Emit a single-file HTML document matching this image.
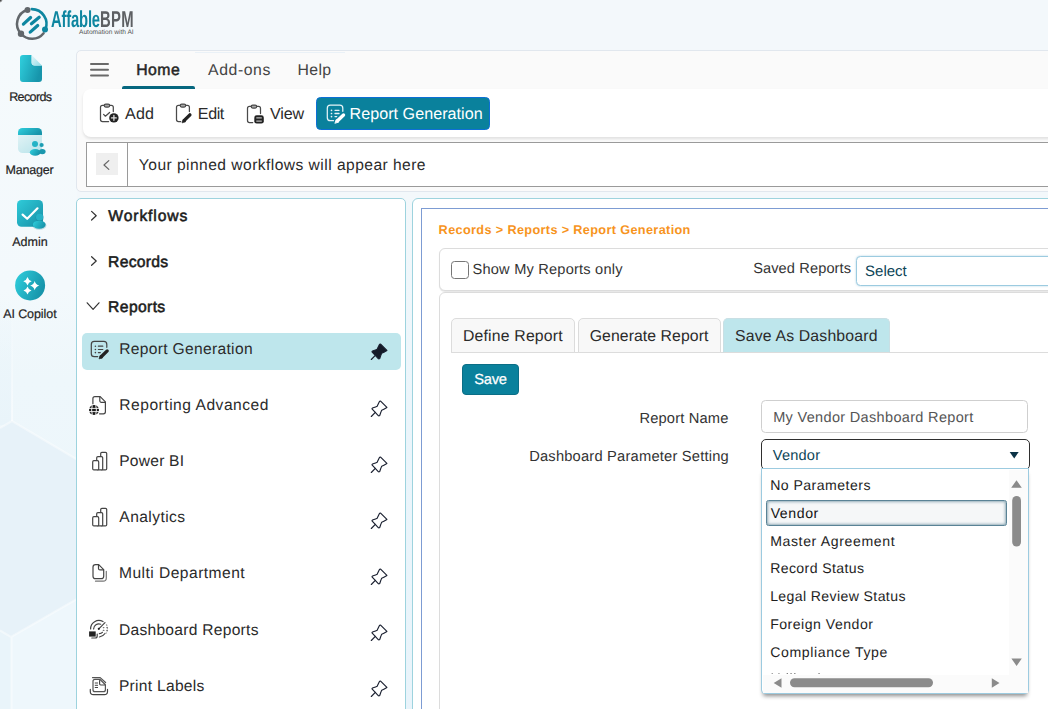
<!DOCTYPE html>
<html lang="en"><head><meta charset="utf-8"><title>AffableBPM - Report Generation</title>
<style>
*{box-sizing:border-box;margin:0;padding:0}
html,body{width:1048px;height:709px;overflow:hidden}
body{position:relative;background:linear-gradient(180deg,#f3f8fb 0,#f3f8fb 28%,#ebf5fb 60%,#e9f4fb 100%);font-family:"Liberation Sans",sans-serif;color:#2b2b2b}
.t{position:absolute;white-space:nowrap;line-height:1;text-rendering:geometricPrecision}
.a{position:absolute}
svg{position:absolute;overflow:visible}
</style></head><body>
<svg style="left:0;top:50px" width="77" height="659" viewBox="0 50 77 659">
<defs><linearGradient id="rb" x1="0" y1="0" x2="0" y2="1"><stop offset="0" stop-color="#f5fafc"/><stop offset=".36" stop-color="#f3f9fc"/><stop offset=".5" stop-color="#eef7fb"/><stop offset="1" stop-color="#ebf5fb"/></linearGradient>
<linearGradient id="rf" x1="0" y1="0" x2="0" y2="1"><stop offset="0" stop-color="#e9f4fa" stop-opacity="0"/><stop offset="1" stop-color="#e9f4fa"/></linearGradient>
<linearGradient id="lf" x1="0" y1="0" x2="0" y2="1"><stop offset="0" stop-color="#fff" stop-opacity="0"/><stop offset="1" stop-color="#fff" stop-opacity=".55"/></linearGradient></defs>
<rect x="0" y="50" width="77" height="659" fill="url(#rb)"/>
<rect x="0" y="300" width="12" height="125" fill="url(#rf)"/>
<path d="M12 421 L77 459.500 V599 L11 637 L0 630.500 V428z" fill="#e7f2f9"/>
<path d="M0 630.500 L11 637 V709 H0z" fill="#e9f4fa"/>
<path d="M11 637 L77 599 V709 H11z" fill="#eef7fc"/>
<rect x="11" y="300" width="2" height="121" fill="url(#lf)"/>
<path d="M0 428 L12 421 L77 459.500 M0 630.500 L11 637 L77 599 M11.500 637 V709" fill="none" stroke="#fff" stroke-opacity=".42" stroke-width="2.200" style="filter:blur(.5px)"/>
</svg>
<div class="a" style="left:0;top:0;width:5px;height:5px;background:radial-gradient(circle at 0 0,#3a3a3a 0,#555 1px,rgba(120,120,120,0) 2.800px)"></div>
<header>
<svg style="left:0;top:0" width="150" height="50" viewBox="0 0 150 50">
<g fill="none" stroke-linecap="round">
<path d="M27.5 9.7 A14.7 14.7 0 0 0 21 33.8 A14.7 14.7 0 0 0 43.6 33.3" stroke="#62676b" stroke-width="2.5"/>
<path d="M31.8 9.1 A14.7 14.7 0 0 1 45.3 29.5" stroke="#0e86a0" stroke-width="2.6"/>
<path d="M23.4 24.1 L30.6 17.5 M31.4 23.8 L39.2 17.2 M30.2 32.1 L37.7 25.5" stroke="#0e86a0" stroke-width="3.2"/>
</g>
<circle cx="27.5" cy="10" r="3" fill="#62676b"/><circle cx="21" cy="33.7" r="3.2" fill="#62676b"/><circle cx="45" cy="29.5" r="3" fill="#0e86a0"/>
</svg>
<span class="t" style="left:51.2px;top:7.6px;font-size:23px;font-weight:bold;transform-origin:0 0;transform:scaleX(0.645);color:#0e86a0;letter-spacing:-0.3px">Affable<span style="color:#5d6063;letter-spacing:0.5px">BPM</span></span>
<span class="t" style="left:79px;top:29.5px;font-size:6.6px;color:#555;transform-origin:0 0;transform:scaleX(1.0)">Automation with AI</span>
</header>
<aside>
<svg style="left:0;top:50px" width="77" height="290" viewBox="0 50 77 290">
<defs>
<linearGradient id="g1" x1="0" y1="0" x2="1" y2="1"><stop offset="0" stop-color="#2fcbd9"/><stop offset="1" stop-color="#168fa6"/></linearGradient>
<linearGradient id="g2" x1="0" y1="0" x2="1" y2="1"><stop offset="0" stop-color="#e6f6f9"/><stop offset="1" stop-color="#8fdde7"/></linearGradient>
<linearGradient id="g3" x1="0" y1="0" x2="0.6" y2="1"><stop offset="0" stop-color="#eaf6f8"/><stop offset="1" stop-color="#bfe6ec"/></linearGradient>
<linearGradient id="g4" x1="0" y1="0" x2="1" y2="0.4"><stop offset="0" stop-color="#30d0de"/><stop offset="1" stop-color="#1795ab"/></linearGradient>
</defs>
<!-- Records -->
<path d="M23 55 H31.6 V62.4 a3 3 0 0 0 3 3 H42 V79 a3 3 0 0 1 -3 3 H23 a3 3 0 0 1 -3 -3 V58 a3 3 0 0 1 3 -3z" fill="url(#g4)"/>
<path d="M31.6 55 L42 65.4 H34.6 a3 3 0 0 1 -3 -3z" fill="url(#g2)"/>
<!-- Manager -->
<rect x="18" y="128" width="24" height="25" rx="4.5" fill="url(#g3)"/>
<path d="M18 135 V132.5 a4.5 4.5 0 0 1 4.5 -4.5 H37.500 a4.500 4.500 0 0 1 4.500 4.500 V135z" fill="url(#g4)"/>
<circle cx="41.6" cy="145" r="2.1" fill="#1c9db3"/><ellipse cx="42.3" cy="151.600" rx="3.3" ry="2.7" fill="#1a98ae"/>
<circle cx="35" cy="144" r="3" fill="#24b3c6"/><ellipse cx="35.2" cy="152.4" rx="5.4" ry="3.400" fill="url(#g4)"/>
<!-- Admin -->
<rect x="17" y="200" width="26" height="26.700" rx="4.5" fill="url(#g1)"/>
<path d="M22.6 214.6 L27.2 218.8 L37.5 208.3" fill="none" stroke="#fff" stroke-width="2.2" stroke-linecap="round" stroke-linejoin="round"/>
<circle cx="39.8" cy="217.6" r="4.2" fill="#0f7c92" opacity=".35"/><ellipse cx="39.4" cy="225.400" rx="7" ry="4.4" fill="#0f7c92" opacity=".25"/><circle cx="39.6" cy="217" r="3.600" fill="#25b2c6"/><ellipse cx="39.2" cy="224.700" rx="6.4" ry="4" fill="url(#g4)"/>
<!-- AI Copilot -->
<circle cx="30.1" cy="285.4" r="15" fill="url(#g4)"/>
<g fill="#fff">
<path d="M27.5 277.00 Q28.42 280.28 31.70 281.2 Q28.42 282.12 27.5 285.40 Q26.58 282.12 23.30 281.2 Q26.58 280.28 27.5 277.00z"/>
<path d="M34.7 281.00 Q35.71 284.59 39.30 285.6 Q35.71 286.61 34.7 290.20 Q33.69 286.61 30.10 285.6 Q33.69 284.59 34.7 281.00z"/>
<path d="M27.5 286.40 Q28.38 289.52 31.50 290.4 Q28.38 291.28 27.5 294.40 Q26.62 291.28 23.50 290.4 Q26.62 289.52 27.5 286.40z"/>
</g>
</svg>
<span class="t" style="left:9.18px;top:91.02px;font-size:12.5px;font-weight:normal;color:#1f1f1f;letter-spacing:-0.610px;-webkit-text-stroke:0.2px #1f1f1f;">Records</span>
<span class="t" style="left:5.43px;top:164.02px;font-size:12.5px;font-weight:normal;color:#1f1f1f;letter-spacing:-0.200px;-webkit-text-stroke:0.2px #1f1f1f;">Manager</span>
<span class="t" style="left:12.13px;top:236.02px;font-size:12.5px;font-weight:normal;color:#1f1f1f;letter-spacing:0.032px;-webkit-text-stroke:0.2px #1f1f1f;">Admin</span>
<span class="t" style="left:3.13px;top:308.02px;font-size:12.5px;font-weight:normal;color:#1f1f1f;letter-spacing:-0.080px;-webkit-text-stroke:0.2px #1f1f1f;">AI Copilot</span>
</aside>
<section>
<div class="a" style="left:76px;top:50px;width:1000px;height:142px;background:#fafafa;border:1px solid #e1e7ee;border-radius:5px"></div>
<div class="a" style="left:195px;top:52px;width:150px;height:1px;background:#eaf1f7"></div>
<div class="a" style="left:90px;top:63.300px;width:19px;height:2.100px;background:#696969;border-radius:1px;box-shadow:0 5.700px 0 #696969,0 11.500px 0 #696969"></div>
<span class="t" style="left:136.25px;top:62.63px;font-size:15.8px;font-weight:normal;color:#262626;letter-spacing:0.459px;-webkit-text-stroke:0.5px #262626;">Home</span>
<span class="t" style="left:208.06px;top:62.63px;font-size:15.8px;font-weight:normal;color:#444;letter-spacing:0.576px;">Add-ons</span>
<span class="t" style="left:297.62px;top:62.63px;font-size:15.8px;font-weight:normal;color:#444;letter-spacing:0.294px;">Help</span>
<div class="a" style="left:122px;top:86px;width:72.5px;height:3px;background:#06677f;border-radius:2px 2px 0 0"></div>
<div class="a" style="left:83px;top:89px;width:1000px;height:48px;background:#fff;border-radius:8px;box-shadow:0 2px 3px rgba(0,0,0,.10)"></div>
<svg style="left:94px;top:98px" width="40" height="30" viewBox="94 98 40 30" fill="none" stroke="#4a4a4a" stroke-width="1.25" stroke-linecap="round" stroke-linejoin="round">
<path d="M113.300 111.600 V107.300 a2 2 0 0 0 -2 -2 H109.700 M104.200 105.300 H102.500 a2 2 0 0 0 -2 2 V119.500 a2 2 0 0 0 2 2 H108.600"/>
<rect x="104.200" y="104" width="5.500" height="3" rx="1.500" fill="#aaa"/>
<path d="M103.600 114.400 L105.400 116.200 L109.600 112.500"/>
<circle cx="113.900" cy="117.900" r="4.700" fill="#222" stroke="none"/>
<path d="M113.900 115.500 V120.300 M111.500 117.900 H116.300" stroke="#ddd" stroke-width="1.3"/>
</svg>
<span class="t" style="left:125.07px;top:105.97px;font-size:16.1px;font-weight:normal;color:#2b2b2b;letter-spacing:0.154px;">Add</span>
<svg style="left:170px;top:98px" width="40" height="30" viewBox="170 98 40 30" fill="none" stroke="#4a4a4a" stroke-width="1.25" stroke-linecap="round" stroke-linejoin="round">
<path d="M189.400 111.600 V107.300 a2 2 0 0 0 -2 -2 H185.700 M180.200 105.300 H178.500 a2 2 0 0 0 -2 2 V119.500 a2 2 0 0 0 2 2 H180.800"/>
<rect x="180.200" y="104" width="5.500" height="3" rx="1.500" fill="#aaa"/>
<path d="M184.300 120.400 L189.900 114.900" stroke="#222" stroke-width="3.400"/>
<path d="M182.200 122.500 L183.300 119.200 L185.400 121.400z" fill="#222" stroke="#222" stroke-width="0.8"/>
</svg>
<span class="t" style="left:197.85px;top:105.97px;font-size:16.1px;font-weight:normal;color:#2b2b2b;letter-spacing:-0.425px;">Edit</span>
<svg style="left:240px;top:98px" width="40" height="30" viewBox="240 98 40 30" fill="none" stroke="#4a4a4a" stroke-width="1.25" stroke-linecap="round" stroke-linejoin="round">
<path d="M260.500 113.500 V108.400 a2 2 0 0 0 -2 -2 H256.700 M251.200 106.400 H249.500 a2 2 0 0 0 -2 2 V120.600 a2 2 0 0 0 2 2 H252.700"/>
<rect x="251.200" y="105.100" width="5.500" height="3" rx="1.500" fill="#aaa"/>
<rect x="254.300" y="115.300" width="9.500" height="8.300" rx="2.400" fill="#222" stroke="none"/>
<path d="M256.300 117.900 H261.800 M256.300 121.100 H261.800" stroke="#bbb" stroke-width="1.300" stroke-linecap="butt"/>
</svg>
<span class="t" style="left:269.98px;top:105.97px;font-size:16.1px;font-weight:normal;color:#2b2b2b;letter-spacing:-0.151px;">View</span>
<div class="a" style="left:316px;top:97px;width:174px;height:33px;background:#0a819c;border:1px solid #0d6fd6;border-radius:4.5px"></div>
<svg style="left:318px;top:98px" width="40" height="30" viewBox="318 98 40 30" fill="none" stroke="#e6f3f6" stroke-width="1.25" stroke-linecap="round" stroke-linejoin="round">
<path d="M342.800 111.300 V108.200 a3 3 0 0 0 -3 -3 H330.300 a3 3 0 0 0 -3 3 V117.700 a3 3 0 0 0 3 3 H333.500"/>
<path d="M335 110.300 H339 M335 113.500 H339 M335 116.600 H336.700" stroke-width="1.3"/>
<path d="M331.500 110.300 h.01 M331.500 113.500 h.01 M331.500 116.600 h.01" stroke-width="1.7"/>
<path d="M337.300 121 L343.500 115" stroke="#fff" stroke-width="3.400"/>
<path d="M335 123 L336.200 119.600 L338.400 121.800z" fill="#fff" stroke="#fff" stroke-width="0.8"/>
</svg>
<span class="t" style="left:349.53px;top:105.97px;font-size:16.1px;font-weight:normal;color:#fff;letter-spacing:0.044px;">Report Generation</span>
<div class="a" style="left:86px;top:142px;width:1000px;height:45px;background:#fff;border:1px solid #9a9a9a"></div>
<div class="a" style="left:127px;top:142px;width:1px;height:45px;background:#9a9a9a"></div>
<div class="a" style="left:96px;top:153px;width:22px;height:22px;background:#efefef"></div>
<svg style="left:96px;top:153px" width="22" height="22" viewBox="96 153 22 22" fill="none" stroke="#666" stroke-width="1.2" stroke-linecap="round" stroke-linejoin="round"><path d="M108.800 160.600 L104 165 L108.800 169.400"/></svg>
<span class="t" style="left:138.84px;top:157.69px;font-size:15.6px;font-weight:normal;color:#2b2b2b;letter-spacing:0.455px;">Your pinned workflows will appear here</span>
</section>
<nav>
<div class="a" style="left:76px;top:198px;width:330px;height:600px;background:#fff;border:1px solid #9dd3de;border-radius:5px"></div>
<svg style="left:86px;top:205px" width="20" height="110" viewBox="86 205 20 110" fill="none" stroke="#333" stroke-width="1.2" stroke-linecap="round" stroke-linejoin="round"><path d="M91.600 211.400 L96.200 215.700 L91.600 220 M91.600 256.700 L96.200 261 L91.600 265.300 M87.200 302.800 L93.100 309.300 L99 302.800"/></svg>
<span class="t" style="left:108.35px;top:208.51px;font-size:15.7px;font-weight:normal;color:#1c1c1c;letter-spacing:0.865px;-webkit-text-stroke:0.55px #1c1c1c;">Workflows</span>
<span class="t" style="left:108.12px;top:254.51px;font-size:15.7px;font-weight:normal;color:#1c1c1c;letter-spacing:0.261px;-webkit-text-stroke:0.55px #1c1c1c;">Records</span>
<span class="t" style="left:108.12px;top:300.01px;font-size:15.7px;font-weight:normal;color:#1c1c1c;letter-spacing:0.363px;-webkit-text-stroke:0.55px #1c1c1c;">Reports</span>
<div class="a" style="left:82px;top:333px;width:319px;height:37px;background:#bee6ec;border-radius:5px"></div>
<span class="t" style="left:119.22px;top:341.99px;font-size:15.6px;font-weight:normal;color:#2b2b2b;letter-spacing:0.316px;">Report Generation</span>
<span class="t" style="left:119.22px;top:397.79px;font-size:15.6px;font-weight:normal;color:#2b2b2b;letter-spacing:0.519px;">Reporting Advanced</span>
<span class="t" style="left:119.22px;top:453.79px;font-size:15.6px;font-weight:normal;color:#2b2b2b;letter-spacing:0.226px;">Power BI</span>
<span class="t" style="left:119.36px;top:509.79px;font-size:15.6px;font-weight:normal;color:#2b2b2b;letter-spacing:0.423px;">Analytics</span>
<span class="t" style="left:118.93px;top:565.69px;font-size:15.6px;font-weight:normal;color:#2b2b2b;letter-spacing:0.467px;">Multi Department</span>
<span class="t" style="left:118.95px;top:623.09px;font-size:15.6px;font-weight:normal;color:#2b2b2b;letter-spacing:0.267px;">Dashboard Reports</span>
<span class="t" style="left:118.95px;top:678.99px;font-size:15.6px;font-weight:normal;color:#2b2b2b;letter-spacing:0.275px;">Print Labels</span>
<svg style="left:84px;top:334px" width="30" height="36" viewBox="84 334 30 36" fill="none" stroke="#444" stroke-width="1.2" stroke-linecap="round" stroke-linejoin="round"><path d="M106.800 347.300 V344.400 a3 3 0 0 0 -3 -3 H94.300 a3 3 0 0 0 -3 3 V353.700 a3 3 0 0 0 3 3 H97.700"/>
<path d="M98.400 346.200 H102.800 M98.400 349.500 H102.800 M98.400 352.600 H100.300" stroke-width="1.2"/>
<path d="M95.400 346.200 h.01 M95.400 349.500 h.01 M95.400 352.600 h.01" stroke-width="1.6"/>
<path d="M101.200 356.800 L107.200 350.900" stroke="#222" stroke-width="3.300"/>
<path d="M99.200 358.500 L100.300 355.500 L102.300 357.500z" fill="#222" stroke="#222" stroke-width="0.8"/></svg>
<svg style="left:84px;top:390px" width="30" height="36" viewBox="84 390 30 36" fill="none" stroke="#444" stroke-width="1.2" stroke-linecap="round" stroke-linejoin="round"><path d="M92.900 403.700 V398.600 a2 2 0 0 1 2 -2 H100.200 L105.400 401.800 V411.800 a2 2 0 0 1 -2 2 H99.500"/>
<path d="M99.800 396.800 V400.800 a1.500 1.500 0 0 0 1.500 1.500 H105.200"/>
<circle cx="94" cy="410" r="5" fill="#1a1a1a" stroke="none"/>
<path d="M89.400 408.400 H98.600 M89.400 411.600 H98.600 M92.200 405.600 Q90.900 410 92.200 414.400 M95.800 405.600 Q97.100 410 95.800 414.400" stroke="#fff" stroke-width="0.9"/></svg>
<svg style="left:84px;top:446px" width="30" height="36" viewBox="84 446 30 36" fill="none" stroke="#444" stroke-width="1.2" stroke-linecap="round" stroke-linejoin="round"><rect x="100.700" y="452.4" width="6" height="17.5" rx="1.200" fill="#fff"/>
<rect x="96.700" y="456.6" width="6" height="13.3" rx="1.200" fill="#fff"/>
<rect x="92.700" y="460.7" width="6" height="9.2" rx="1.200" fill="#fff"/></svg>
<svg style="left:84px;top:502px" width="30" height="36" viewBox="84 502 30 36" fill="none" stroke="#444" stroke-width="1.2" stroke-linecap="round" stroke-linejoin="round"><rect x="100.700" y="508.4" width="6" height="17.5" rx="1.200" fill="#fff"/>
<rect x="96.700" y="512.6" width="6" height="13.3" rx="1.200" fill="#fff"/>
<rect x="92.700" y="516.7" width="6" height="9.2" rx="1.200" fill="#fff"/></svg>
<svg style="left:84px;top:558px" width="30" height="36" viewBox="84 558 30 36" fill="none" stroke="#444" stroke-width="1.2" stroke-linecap="round" stroke-linejoin="round"><path d="M95.500 564.600 H98.700 L103.700 569.600 V576.200 a2.500 2.500 0 0 1 -2.500 2.500 H95.500 a2.500 2.500 0 0 1 -2.500 -2.500 V567.100 a2.500 2.500 0 0 1 2.500 -2.500z"/>
<path d="M98.500 564.800 V568.400 a1.500 1.500 0 0 0 1.500 1.500 H103.500"/>
<path d="M106.300 571.300 V578 a3.200 3.200 0 0 1 -3.200 3.200 H95.500" stroke="#777"/></svg>
<svg style="left:84px;top:614px" width="30" height="36" viewBox="84 614 30 36" fill="none" stroke="#444" stroke-width="1.2" stroke-linecap="round" stroke-linejoin="round"><path d="M90.600 629 A8.300 8.300 0 0 1 103 621.600" />
<path d="M93.600 629 A5.300 5.300 0 0 1 100.700 624.200" />
<path d="M98.800 628.800 L105 622.600"/>
<circle cx="98.800" cy="628.800" r="1.100" fill="#222" stroke="none"/>
<path d="M99.400 633.700 Q101.300 633.500 102.400 632.300 M99.400 637 A8.300 8.300 0 0 0 105 633.500" />
<path d="M106.500 624.800 A8.300 8.300 0 0 1 106.300 633" stroke="#999" stroke-dasharray="0.800 2"/>
<path d="M103.300 627.600 h.6 M106.800 627.600 h.6 M103.300 630.400 h.6 M106.800 630.400 h.6" stroke="#777"/>
<rect x="89.100" y="631.400" width="6.600" height="5.200" fill="#222" stroke="none"/>
<path d="M97.200 634 V636 a2 2 0 0 1 -2 2 H91.800" /></svg>
<svg style="left:84px;top:670px" width="30" height="36" viewBox="84 670 30 36" fill="none" stroke="#444" stroke-width="1.2" stroke-linecap="round" stroke-linejoin="round"><path d="M95 679.300 H99.800 L105.400 684.700 V689.700 a2 2 0 0 1 -2 2 H95 a2 2 0 0 1 -2 -2 V681.300 a2 2 0 0 1 2 -2z" stroke="#555"/>
<path d="M99.600 680.500 V683.800 a1.200 1.200 0 0 0 1.200 1.200 H104.800"/>
<path d="M92.500 677.600 H100.200 L105.600 682.500" stroke="#555"/>
<path d="M95.200 683 H97.600 M95.200 685.300 H97.600 M95.200 687.500 H97.600" stroke-width="1"/>
<path d="M90.300 689.400 V691.400 a3.200 3.200 0 0 0 3.200 3.200 H104.300 a3.200 3.200 0 0 0 3.200 -3.200 V689.400"/></svg>
<svg style="left:366px;top:339.0px" width="26" height="26" viewBox="0 0 26 26" fill="none" stroke="#1a2030" stroke-width="1.15" stroke-linecap="round" stroke-linejoin="round"><path d="M14.600 5.100 L20.900 11.400 C19 12.600 17.400 13.600 15.700 14.300 C14.900 15.900 14.400 17.600 13.700 19.600 L12.500 19.800 L6 12.900 L6.200 12.200 C8 11.500 9.600 10.900 11.200 10.200 C12 8.600 12.700 7 13.600 5.300 Z" fill="#141a28"/><path d="M9.300 16.300 L5.300 20.500"/></svg>
<svg style="left:366px;top:396.0px" width="26" height="26" viewBox="0 0 26 26" fill="none" stroke="#1a2030" stroke-width="1.15" stroke-linecap="round" stroke-linejoin="round"><path d="M14.600 5.100 L20.900 11.400 C19 12.600 17.400 13.600 15.700 14.300 C14.900 15.900 14.400 17.600 13.700 19.600 L12.500 19.800 L6 12.900 L6.200 12.200 C8 11.500 9.600 10.900 11.200 10.200 C12 8.600 12.700 7 13.600 5.300 Z" fill="none"/><path d="M9.300 16.300 L5.300 20.500"/></svg>
<svg style="left:366px;top:451.7px" width="26" height="26" viewBox="0 0 26 26" fill="none" stroke="#1a2030" stroke-width="1.15" stroke-linecap="round" stroke-linejoin="round"><path d="M14.600 5.100 L20.900 11.400 C19 12.600 17.400 13.600 15.700 14.300 C14.900 15.900 14.400 17.600 13.700 19.600 L12.500 19.800 L6 12.900 L6.200 12.200 C8 11.500 9.600 10.900 11.200 10.200 C12 8.600 12.700 7 13.600 5.300 Z" fill="none"/><path d="M9.300 16.300 L5.300 20.500"/></svg>
<svg style="left:366px;top:507.6px" width="26" height="26" viewBox="0 0 26 26" fill="none" stroke="#1a2030" stroke-width="1.15" stroke-linecap="round" stroke-linejoin="round"><path d="M14.600 5.100 L20.900 11.400 C19 12.600 17.400 13.600 15.700 14.300 C14.900 15.900 14.400 17.600 13.700 19.600 L12.500 19.800 L6 12.900 L6.200 12.200 C8 11.500 9.600 10.900 11.200 10.200 C12 8.600 12.700 7 13.600 5.300 Z" fill="none"/><path d="M9.300 16.300 L5.300 20.500"/></svg>
<svg style="left:366px;top:563.6px" width="26" height="26" viewBox="0 0 26 26" fill="none" stroke="#1a2030" stroke-width="1.15" stroke-linecap="round" stroke-linejoin="round"><path d="M14.600 5.100 L20.900 11.400 C19 12.600 17.400 13.600 15.700 14.300 C14.900 15.900 14.400 17.600 13.700 19.600 L12.500 19.800 L6 12.900 L6.200 12.200 C8 11.500 9.600 10.900 11.200 10.200 C12 8.600 12.700 7 13.600 5.300 Z" fill="none"/><path d="M9.300 16.300 L5.300 20.500"/></svg>
<svg style="left:366px;top:619.7px" width="26" height="26" viewBox="0 0 26 26" fill="none" stroke="#1a2030" stroke-width="1.15" stroke-linecap="round" stroke-linejoin="round"><path d="M14.600 5.100 L20.900 11.400 C19 12.600 17.400 13.600 15.700 14.300 C14.900 15.900 14.400 17.600 13.700 19.600 L12.500 19.800 L6 12.900 L6.200 12.200 C8 11.500 9.600 10.900 11.200 10.200 C12 8.600 12.700 7 13.600 5.300 Z" fill="none"/><path d="M9.300 16.300 L5.300 20.500"/></svg>
<svg style="left:366px;top:675.6px" width="26" height="26" viewBox="0 0 26 26" fill="none" stroke="#1a2030" stroke-width="1.15" stroke-linecap="round" stroke-linejoin="round"><path d="M14.600 5.100 L20.900 11.400 C19 12.600 17.400 13.600 15.700 14.300 C14.900 15.900 14.400 17.600 13.700 19.600 L12.500 19.800 L6 12.900 L6.200 12.200 C8 11.500 9.600 10.900 11.200 10.200 C12 8.600 12.700 7 13.600 5.300 Z" fill="none"/><path d="M9.300 16.300 L5.300 20.500"/></svg>
</nav>
<main>
<div class="a" style="left:412px;top:198px;width:800px;height:600px;background:#fff;border:1px solid #9dd3de;border-radius:6px"></div>
<div class="a" style="left:421px;top:208px;width:800px;height:600px;background:#fff;border:1px solid #7d9cd3"></div>
<span class="t" style="left:438.62px;top:223.65px;font-size:12.7px;font-weight:bold;color:#f7941d;letter-spacing:0.354px;">Records &gt; Reports &gt; Report Generation</span>
<div class="a" style="left:439px;top:248px;width:800px;height:43px;background:#fff;border:1px solid #dcdcdc;border-radius:6px;box-shadow:0 1px 1px rgba(0,0,0,.10)"></div>
<div class="a" style="left:451px;top:261px;width:17.500px;height:17.500px;background:#fff;border:1.2px solid #767676;border-radius:3.5px"></div>
<span class="t" style="left:472.52px;top:262.54px;font-size:14.6px;font-weight:normal;color:#333;letter-spacing:0.211px;">Show My Reports only</span>
<span class="t" style="left:753.13px;top:261.74px;font-size:14.6px;font-weight:normal;color:#333;letter-spacing:0.117px;">Saved Reports</span>
<div class="a" style="left:855.500px;top:255.500px;width:300px;height:30px;background:#fff;border:1px solid #9ccbe0;border-radius:4.500px;box-shadow:0 0 2px rgba(80,160,200,.5)"></div>
<span class="t" style="left:865.09px;top:263.90px;font-size:15px;font-weight:normal;color:#0d4558;letter-spacing:-0.012px;">Select</span>
<div class="a" style="left:439px;top:291.500px;width:800px;height:600px;background:#fff;border:1px solid #dcdcdc;border-radius:6px 0 0 0"></div>
<div class="a" style="left:451px;top:352px;width:700px;height:1px;background:#dcdcdc"></div>
<div class="a" style="left:451px;top:318px;width:124px;height:35px;background:#f8f8f8;border:1px solid #dcdcdc;border-radius:5px 5px 0 0"></div>
<div class="a" style="left:578px;top:318px;width:143px;height:35px;background:#f8f8f8;border:1px solid #dcdcdc;border-radius:5px 5px 0 0"></div>
<div class="a" style="left:723px;top:318px;width:167px;height:35px;background:#bee6ec;border:1px solid #c9dfe4;border-bottom-color:#dcdcdc;border-radius:5px 5px 0 0"></div>
<span class="t" style="left:462.90px;top:328.93px;font-size:15.8px;font-weight:normal;color:#2b2b2b;letter-spacing:0.191px;">Define Report</span>
<span class="t" style="left:589.74px;top:328.93px;font-size:15.8px;font-weight:normal;color:#2b2b2b;letter-spacing:0.068px;">Generate Report</span>
<span class="t" style="left:735.01px;top:328.93px;font-size:15.8px;font-weight:normal;color:#2b2b2b;letter-spacing:0.179px;">Save As Dashboard</span>
<div class="a" style="left:462px;top:364px;width:57px;height:30.500px;background:#0a819c;border:1px solid #0b6e86;border-radius:4px"></div>
<span class="t" style="left:474.18px;top:372.66px;font-size:14.7px;font-weight:normal;color:#fff;letter-spacing:-0.247px;-webkit-text-stroke:0.25px #fff;">Save</span>
<span class="t" style="left:639.39px;top:411.76px;font-size:14.7px;font-weight:normal;color:#333;letter-spacing:0.164px;">Report Name</span>
<span class="t" style="left:529.16px;top:450.06px;font-size:14.7px;font-weight:normal;color:#333;letter-spacing:0.202px;">Dashboard Parameter Setting</span>
<div class="a" style="left:761px;top:400px;width:267px;height:33px;background:#fff;border:1px solid #cfcfcf;border-radius:4.500px"></div>
<span class="t" style="left:773.17px;top:410.63px;font-size:14.5px;font-weight:normal;color:#555;letter-spacing:0.332px;">My Vendor Dashboard Report</span>
<div class="a" style="left:761px;top:439px;width:269px;height:31px;background:#fff;border:1.500px solid #2f2f2f;border-radius:5px"></div>
<span class="t" style="left:772.81px;top:448.84px;font-size:14.6px;font-weight:normal;color:#0d4558;letter-spacing:0.199px;">Vendor</span>
<svg style="left:1009px;top:451px" width="11" height="8" viewBox="0 0 11 8"><path d="M0.700 1 H9.700 L5.200 7.400z" fill="#0c3346"/></svg>
<div class="a" style="left:761px;top:468px;width:267.500px;height:225.500px;background:#fff;border:1px solid #9ccbe0;border-radius:0 0 4px 4px;box-shadow:0 4px 4px -2px rgba(0,0,0,.45)"></div>
<div class="a" style="left:1008.500px;top:469.500px;width:19px;height:223px;background:#fbfbfb"></div>
<div class="a" style="left:762.500px;top:674.500px;width:246px;height:18px;background:#fbfbfb"></div>
<div class="a" style="left:766px;top:500px;width:241px;height:26px;background:#f5f7f8;border:1.500px solid #5a8396;border-radius:2.500px;box-shadow:inset 0 0 3px 0.500px rgba(70,115,135,.75)"></div>
<span class="t" style="left:770.14px;top:477.76px;font-size:14.1px;font-weight:normal;color:#1e1e1e;letter-spacing:0.463px;">No Parameters</span>
<span class="t" style="left:770.66px;top:506.06px;font-size:14.1px;font-weight:normal;color:#111;letter-spacing:0.589px;">Vendor</span>
<span class="t" style="left:770.14px;top:533.96px;font-size:14.1px;font-weight:normal;color:#1e1e1e;letter-spacing:0.622px;">Master Agreement</span>
<span class="t" style="left:770.14px;top:560.66px;font-size:14.1px;font-weight:normal;color:#1e1e1e;letter-spacing:0.384px;">Record Status</span>
<span class="t" style="left:770.14px;top:588.76px;font-size:14.1px;font-weight:normal;color:#1e1e1e;letter-spacing:0.379px;">Legal Review Status</span>
<span class="t" style="left:770.14px;top:616.86px;font-size:14.1px;font-weight:normal;color:#1e1e1e;letter-spacing:0.499px;">Foreign Vendor</span>
<span class="t" style="left:770.24px;top:644.76px;font-size:14.1px;font-weight:normal;color:#1e1e1e;letter-spacing:0.607px;">Compliance Type</span>
<div class="a" style="left:770px;top:673px;width:236px;height:1.200px;opacity:.6;overflow:hidden"><span class="t" style="left:0.44px;top:-1.64px;font-size:14.1px;font-weight:normal;color:#1e1e1e;letter-spacing:0.600px;">Utilization</span></div>
<svg style="left:1009px;top:470px" width="19" height="205" viewBox="1009 470 19 205"><path d="M1011.200 487.800 L1016.500 480.300 L1021.800 487.800z M1011.400 658.400 H1021.800 L1016.600 665.900z" fill="#8b8b8b"/><rect x="1012.200" y="496" width="8.800" height="50.500" rx="4.400" fill="#8b8b8b"/></svg>
<svg style="left:770px;top:675px" width="238" height="18" viewBox="770 675 238 18"><path d="M781.500 678.200 V687.800 L773.700 683z M991.800 678.200 V687.800 L999.500 683z" fill="#8b8b8b"/><rect x="790" y="678.200" width="143" height="9" rx="4.500" fill="#8b8b8b"/></svg>
</main>
</body></html>
